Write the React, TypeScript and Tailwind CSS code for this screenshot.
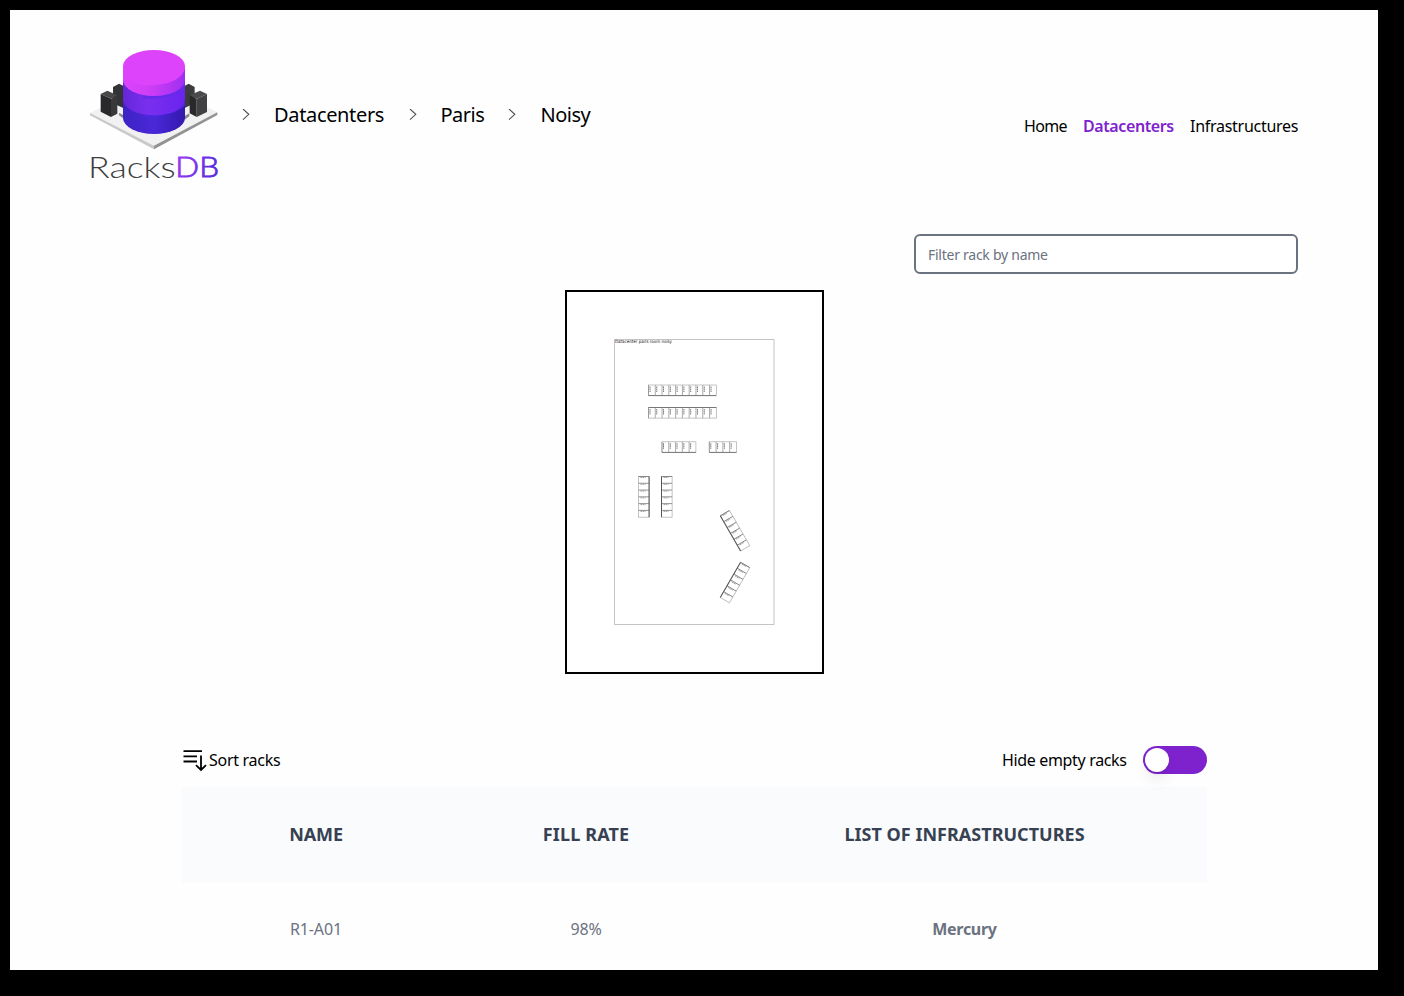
import React from "react";

type RackRow = {
  x: number;
  y: number;
  count: number;
  angle: number;
  thick: "left" | "right";
};

const columns: RackRow[] = [
  { x: 638.5, y: 476.5, count: 6, angle: 0, thick: "right" },
  { x: 661.5, y: 476.5, count: 6, angle: 0, thick: "left" },
  { x: 720.3, y: 515.8, count: 6, angle: -30, thick: "left" },
  { x: 740.6, y: 562.3, count: 6, angle: 30, thick: "left" },
];

const rows = [
  { x: 648.5, y: 385, count: 10, thick: "bottom" },
  { x: 648.5, y: 407.5, count: 10, thick: "top" },
  { x: 662, y: 441.8, count: 5, thick: "bottom" },
  { x: 709.3, y: 441.8, count: 4, thick: "bottom" },
];

const CELL = 6.78;
const DEPTH = 10.6;

function Logo() {
  return (
    <svg className="-mb-5 h-[154px] w-[134px] shrink-0" viewBox="21 24 402 462">
      <defs>
        <linearGradient id="pinkSide" x1="0" x2="1">
          <stop offset="0" stopColor="#dc43fb" />
          <stop offset="0.4" stopColor="#cf3ff6" />
          <stop offset="1" stopColor="#a02ff0" />
        </linearGradient>
        <linearGradient id="violetSide" x1="0" x2="1">
          <stop offset="0" stopColor="#6526da" />
          <stop offset="0.4" stopColor="#7a2fee" />
          <stop offset="1" stopColor="#6a24ee" />
        </linearGradient>
        <linearGradient id="blueSide" x1="0" x2="1">
          <stop offset="0" stopColor="#3d22c4" />
          <stop offset="0.5" stopColor="#4a28d8" />
          <stop offset="1" stopColor="#3318ae" />
        </linearGradient>
        <linearGradient id="dbText" x1="0" y1="0" x2="1" y2="0.3">
          <stop offset="0" stopColor="#a23df5" />
          <stop offset="1" stopColor="#5a2be0" />
        </linearGradient>
      </defs>
      <path d="M30 219 222 122 412 217 222 317Z" fill="#f1f1f2" />
      <path d="M30 219 222 317V328L30 226Z" fill="#c9c9ca" />
      <path d="M412 217 222 317V328L412 225Z" fill="#929294" />
      <path d="M99 141 117 131 136 140V207L99 190Z" fill="#343436" />
      <path d="M309 140 326 131 344 141V190L309 206Z" fill="#3c3c3e" />
      <path d="M117 219 132 226V236L117 226ZM313 229 328 220V229L313 240Z" fill="#88888a" />
      <path d="M62 162 82 152 112 166 93 176Z" fill="#48484a" />
      <path d="M62 162 93 176V231L62 215Z" fill="#29292b" />
      <path d="M93 176 112 166V221L93 231Z" fill="#39393b" />
      <path d="M329 166 360 152 381 162 350 177Z" fill="#4b4b4d" />
      <path d="M329 166 350 177V231L329 220Z" fill="#29292b" />
      <path d="M350 177 381 162V216L350 231Z" fill="#414143" />
      <path d="M129 178H315V234A93 48 0 0 1 129 234Z" fill="url(#blueSide)" />
      <path d="M190 224Q278 222 315 184V196Q281 231 190 231Z" fill="#4e27df" />
      <path d="M129 120H315V178A93 48 0 0 1 129 178Z" fill="url(#violetSide)" />
      <path d="M188 167Q275 164 315 125V148Q281 180 188 175Z" fill="#672ae8" />
      <path d="M129 78H315V120A93 48 0 0 1 129 120Z" fill="url(#pinkSide)" />
      <path d="M129 78A93 48 0 0 1 315 78V86Q300 134 200 137Q150 134 129 104Z" fill="#dc43fb" />
      <text
        x="24"
        y="413"
        fill="#3d3d40"
        fontSize="87"
        fontWeight="300"
        textLength="263"
        lengthAdjust="spacingAndGlyphs"
        className="font-['Lato',sans-serif]"
      >
        Racks
      </text>
      <text
        x="286"
        y="412"
        fill="url(#dbText)"
        fontSize="85"
        fontWeight="300"
        stroke="url(#dbText)"
        strokeWidth="2.5"
        textLength="131"
        lengthAdjust="spacingAndGlyphs"
        className="font-['Lato',sans-serif]"
      >
        DB
      </text>
    </svg>
  );
}

function Chevron() {
  return (
    <svg className="h-3 w-2" viewBox="0 0 8 12" fill="none" stroke="#505054" strokeWidth="1.1">
      <path d="M1 0 6.8 5.3 1 10.6" />
    </svg>
  );
}

function FloorPlan() {
  return (
    <svg className="h-[380px] w-[255px]" viewBox="567 292 255 380">
      <rect x="614.5" y="339.5" width="159.5" height="285" fill="none" stroke="#c4c4c4" strokeWidth="1" />
      <text
        x="615"
        y="343.4"
        fontSize="4.4"
        fill="#111"
        textLength="57"
        lengthAdjust="spacingAndGlyphs"
        className="font-['DejaVu_Sans',sans-serif]"
      >
        Datacenter paris room noisy
      </text>
      {rows.map((row) => (
        <g key={`${row.x}-${row.y}`} transform={`translate(${row.x} ${row.y})`}>
          <rect width={row.count * CELL} height={DEPTH} fill="none" stroke="#aaa" strokeWidth="0.7" />
          {Array.from({ length: row.count }, (_, i) => (
            <g key={i} transform={`translate(${i * CELL} 0)`}>
              <path d={`M0 0V${DEPTH}`} stroke="#888" strokeWidth="0.7" />
              <path d="M1.5 1.5V7" stroke="#777" strokeWidth="1" strokeDasharray="1.6 .5" />
            </g>
          ))}
          <path
            d={`M0 ${row.thick === "top" ? 0 : DEPTH}H${row.count * CELL}`}
            stroke="#777"
            strokeWidth="1"
          />
        </g>
      ))}
      {columns.map((col) => (
        <g key={`${col.x}-${col.y}`} transform={`translate(${col.x} ${col.y}) rotate(${col.angle})`}>
          <rect width={DEPTH} height={col.count * CELL} fill="none" stroke="#aaa" strokeWidth="0.7" />
          {Array.from({ length: col.count }, (_, i) => (
            <g key={i} transform={`translate(0 ${i * CELL})`}>
              <path d={`M0 0H${DEPTH}`} stroke="#777" strokeWidth="0.8" />
              <path d="M2 1H7" stroke="#888" strokeWidth="0.8" strokeDasharray="1.6 .5" />
            </g>
          ))}
          <path
            d={`M${col.thick === "left" ? 0 : DEPTH} 0V${col.count * CELL}`}
            stroke="#555"
            strokeWidth="1"
          />
        </g>
      ))}
    </svg>
  );
}

export default function App() {
  return (
    <div className="h-[996px] w-[1404px] overflow-hidden bg-black pt-[10px] pl-[10px] font-['Noto_Sans',sans-serif] text-black">
      <div className="flex h-[960px] w-[1368px] flex-col overflow-hidden bg-[#fefefe]">
        <header className="flex h-[224px] shrink-0 justify-between pr-20 pl-[77px]">
          <div className="box-content flex h-[132px] items-center pt-[39px]">
            <Logo />
            <nav className="flex items-center text-[20px] leading-7">
              <span className="ml-[21px]"><Chevron /></span>
              <a className="ml-6 w-[111px] whitespace-nowrap tracking-[-0.34px]">Datacenters</a>
              <span className="ml-6"><Chevron /></span>
              <a className="ml-[23.5px] w-[45px] whitespace-nowrap tracking-[-0.5px]">Paris</a>
              <span className="ml-[22.5px]"><Chevron /></span>
              <a className="ml-[24.5px] whitespace-nowrap tracking-[-0.5px]">Noisy</a>
            </nav>
          </div>
          <nav className="flex gap-4 pt-[104px] text-[16px] leading-6 whitespace-nowrap">
            <a className="w-[43px] tracking-[-0.7px]">Home</a>
            <a className="w-[91px] font-semibold tracking-[-0.4px] text-[#7e22ce]">Datacenters</a>
            <a className="w-[108px] tracking-[-0.28px]">Infrastructures</a>
          </nav>
        </header>
        <div className="flex shrink-0 justify-end pr-20">
          <input
            className="h-10 w-96 rounded-md border-2 border-[#6b7280] bg-white px-3 text-[14px] tracking-[-0.26px] placeholder:text-[#6b7280]"
            placeholder="Filter rack by name"
          />
        </div>
        <div className="mt-4 ml-[555px] h-[384px] w-[259px] shrink-0 border-2 border-black bg-white">
          <FloorPlan />
        </div>
        <main className="mt-[70px] ml-[172px] w-[1025px] shrink-0">
          <div className="flex h-[43px] items-start justify-between text-[16px] leading-7 whitespace-nowrap">
            <button className="flex items-center pt-[2px]">
              <svg className="h-6 w-[27px]" viewBox="0 0 27 24" fill="none" stroke="black" strokeWidth="1.8">
                <path d="M1.5 3.2H20M1.5 8.3H15M1.5 13.5H15M19 7.5V21.5M14 17.2 19 22 24 17.2" />
              </svg>
              <span className="tracking-[-0.28px]">Sort racks</span>
            </button>
            <div className="flex gap-4 pt-[2px]">
              <span className="w-[125px] tracking-[-0.34px]">Hide empty racks</span>
              <button className="h-7 w-16 rounded-full bg-[#7e22ce] p-[2px]">
                <span className="block size-6 rounded-full bg-white shadow-lg" />
              </button>
            </div>
          </div>
          <table className="w-[1025px] table-fixed border-collapse text-center">
            <colgroup>
              <col className="w-[268px]" />
              <col className="w-[272px]" />
              <col className="w-[485px]" />
            </colgroup>
            <thead className="h-24 bg-[#f9fbfd] text-[18px] text-[#374151]">
              <tr>
                <th className="pb-0.5 font-bold tracking-[-0.1px]">NAME</th>
                <th className="pb-0.5 font-bold tracking-[0.15px]">FILL RATE</th>
                <th className="pb-0.5 font-bold tracking-[0.02px]">LIST OF INFRASTRUCTURES</th>
              </tr>
            </thead>
            <tbody className="text-[16px] text-[#6b7280]">
              <tr className="h-[92px]">
                <td className="tracking-[-0.1px]">R1-A01</td>
                <td className="tracking-[-0.2px]">98%</td>
                <td className="font-bold tracking-[-0.3px]">Mercury</td>
              </tr>
            </tbody>
          </table>
        </main>
      </div>
    </div>
  );
}
